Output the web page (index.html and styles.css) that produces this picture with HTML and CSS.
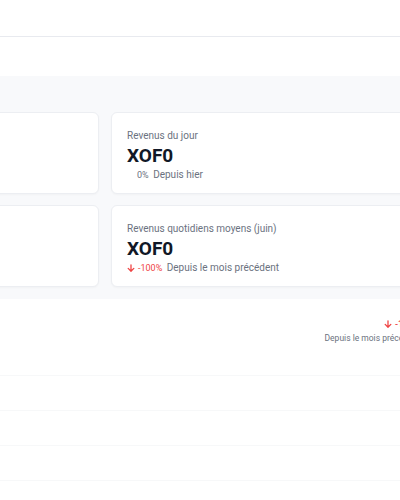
FILE: index.html
```html
<!DOCTYPE html>
<html>
<head>
    <title>Tableau de bord - Revenus</title>
    <link rel="stylesheet" href="styles.css">
</head>
<body>
    <div class="topbar"></div>
    <div class="subbar"></div>

    <div class="stats">
        <div class="grid">
            <div class="card">
                <p class="label">Revenus du mois</p>
                <p class="value">XOF0</p>
                <p class="change"><span class="pct down"><svg class="arrow" viewBox="0 0 10 10"><path d="M5 1v8M1.5 5.5L5 9l3.5-3.5"/></svg>-100%</span> Depuis le mois précédent</p>
            </div>
            <div class="card">
                <p class="label">Revenus du jour</p>
                <p class="value">XOF0</p>
                <p class="change"><span class="pct flat">0%</span> Depuis hier</p>
            </div>
            <div class="card">
                <p class="label">Revenus totaux</p>
                <p class="value">XOF0</p>
                <p class="change"><span class="pct flat">0%</span> Depuis hier</p>
            </div>
            <div class="card">
                <p class="label">Revenus quotidiens moyens (juin)</p>
                <p class="value">XOF0</p>
                <p class="change"><span class="pct down"><svg class="arrow" viewBox="0 0 10 10"><path d="M5 1v8M1.5 5.5L5 9l3.5-3.5"/></svg>-100%</span> Depuis le mois précédent</p>
            </div>
        </div>
    </div>

    <div class="chart">
        <div class="chart-head">
            <div class="trend">
                <span class="pct down"><svg class="arrow" viewBox="0 0 10 10"><path d="M5 1v8M1.5 5.5L5 9l3.5-3.5"/></svg>-100%</span>
                <span class="since">Depuis le mois précédent</span>
            </div>
        </div>
        <div class="chart-lines">
            <div class="line"></div>
            <div class="line"></div>
            <div class="line"></div>
            <div class="line"></div>
        </div>
    </div>
</body>
</html>
```

FILE: styles.css
```css
body { margin: 0; overflow: hidden; font-family: Roboto, "Noto Sans", sans-serif; background: #fff; color: #111827; }
p { margin: 0; }

.topbar { height: 36px; border-bottom: 1px solid #e8eaef; }
.subbar { height: 39px; }

.stats { background: #f8f9fb; padding: 36px 0 12px; }
.grid { display: grid; grid-template-columns: 288px 320px; gap: 11px 12px; margin-left: -189px; }
.card { background: #fff; border: 1px solid #eceef2; border-radius: 6px; padding: 16px 15px 0; height: 64px; box-shadow: 0 1px 2px rgba(0,0,0,0.03); }

.label { font-size: 10px; line-height: 14px; color: #6b7280; }
.value { font-size: 19px; font-weight: 700; line-height: 22px; color: #111827; margin-top: 2px; }
.change { font-size: 10px; line-height: 14px; color: #6b7280; margin-top: 1px; }

.pct { font-size: 9px; margin-right: 2px; }
.pct.flat { color: #6b7280; padding-left: 10px; }
.pct.down { color: #ef4444; }
.arrow { width: 8px; height: 8px; margin-right: 3px; vertical-align: -1px; fill: none; stroke: #ef4444; stroke-width: 1.6; stroke-linecap: round; stroke-linejoin: round; }

.chart { width: 420px; padding-top: 19px; }
.chart-head { display: flex; justify-content: flex-end; }
.trend { text-align: right; }
.trend .pct { display: block; font-weight: 500; line-height: 13px; margin-right: 0; }
.trend .since { display: block; font-size: 8.5px; line-height: 13px; margin-top: 1px; color: #6b7280; }

.chart-lines { margin-top: 30px; }
.line { height: 34px; border-top: 1px solid #f7f8f9; }
```
